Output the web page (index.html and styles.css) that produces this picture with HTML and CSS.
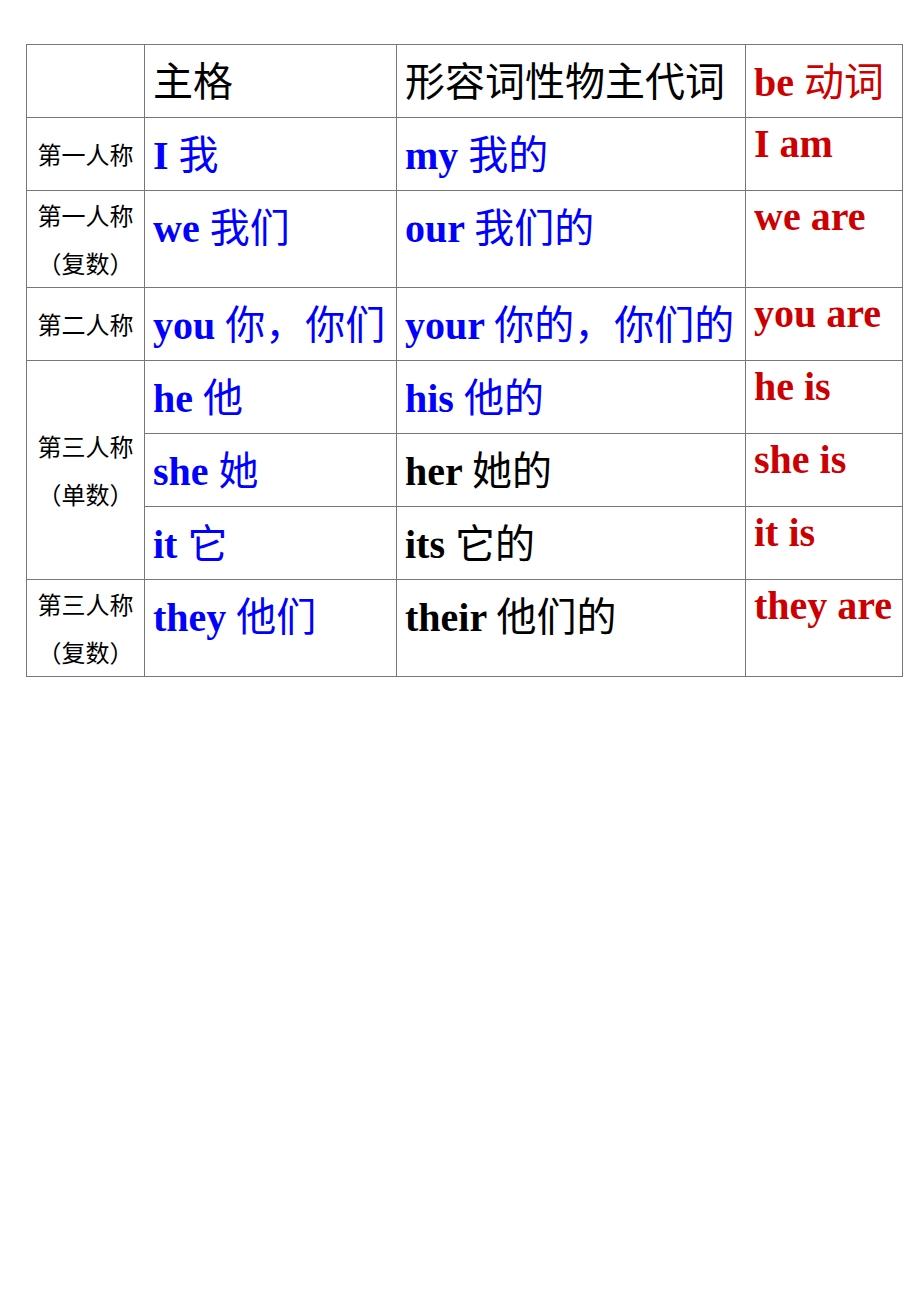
FILE: index.html
```html
<!DOCTYPE html>
<html lang="zh-CN">
<head>
<meta charset="utf-8">
<title>人称代词表</title>
<link rel="stylesheet" href="styles.css">
</head>
<body>
<div class="page">
<table class="pron">
  <colgroup>
    <col class="c-label"><col class="c-subj"><col class="c-poss"><col class="c-be">
  </colgroup>
  <tr class="r-head">
    <td class="label"></td>
    <td class="main black"><span class="zh">主格</span></td>
    <td class="main black"><span class="zh">形容词性物主代词</span></td>
    <td class="main red">be <span class="zh">动词</span></td>
  </tr>
  <tr class="r-short">
    <td class="label">第一人称</td>
    <td class="main blue">I <span class="zh">我</span></td>
    <td class="main blue">my <span class="zh">我的</span></td>
    <td class="be red">I am</td>
  </tr>
  <tr class="r-tall">
    <td class="label">第一人称<br>（复数）</td>
    <td class="main blue">we <span class="zh">我们</span></td>
    <td class="main blue">our <span class="zh">我们的</span></td>
    <td class="be red">we are</td>
  </tr>
  <tr class="r-short">
    <td class="label">第二人称</td>
    <td class="main blue">you <span class="zh">你，你们</span></td>
    <td class="main blue">your <span class="zh">你的，你们的</span></td>
    <td class="be red">you are</td>
  </tr>
  <tr class="r-short">
    <td class="label" rowspan="3">第三人称<br>（单数）</td>
    <td class="main blue">he <span class="zh">他</span></td>
    <td class="main blue">his <span class="zh">他的</span></td>
    <td class="be red">he is</td>
  </tr>
  <tr class="r-short">
    <td class="main blue">she <span class="zh">她</span></td>
    <td class="main black">her <span class="zh">她的</span></td>
    <td class="be red">she is</td>
  </tr>
  <tr class="r-short">
    <td class="main blue">it <span class="zh">它</span></td>
    <td class="main black">its <span class="zh">它的</span></td>
    <td class="be red">it is</td>
  </tr>
  <tr class="r-tall">
    <td class="label">第三人称<br>（复数）</td>
    <td class="main blue">they <span class="zh">他们</span></td>
    <td class="main black">their <span class="zh">他们的</span></td>
    <td class="be red">they are</td>
  </tr>
</table>
</div>
</body>
</html>
```

FILE: styles.css
```css
html, body {
  margin: 0;
  padding: 0;
  background: #ffffff;
}

.page {
  padding: 44px 0 0 26px;
}

.pron {
  border-collapse: collapse;
  table-layout: fixed;
  width: 876px;
}

.c-label { width: 118px; }
.c-subj { width: 252px; }
.c-poss { width: 349px; }
.c-be { width: 157px; }

.pron td {
  border: 1px solid #777777;
  padding: 0 0 0 8px;
  vertical-align: top;
  white-space: nowrap;
  overflow: hidden;
}

.r-head { height: 73px; }
.r-short { height: 72px; }
.r-tall { height: 96px; }

.label {
  font-family: "Noto Sans CJK SC", sans-serif;
  font-size: 24px;
  line-height: 48px;
  text-align: center;
  vertical-align: middle !important;
  padding: 0 !important;
  color: #000000;
}

.main, .be {
  font-family: "Liberation Serif", "Noto Sans CJK SC", serif;
  font-weight: bold;
  font-size: 40px;
}

.pron td.main {
  line-height: 68px;
  padding-top: 4px;
}

.be {
  line-height: 51px;
}

.zh {
  font-family: "Noto Sans CJK SC", sans-serif;
  font-weight: normal;
  line-height: 1;
}

.black { color: #000000; }
.blue { color: #0000ff; }
.red { color: #cc0000; }
```
